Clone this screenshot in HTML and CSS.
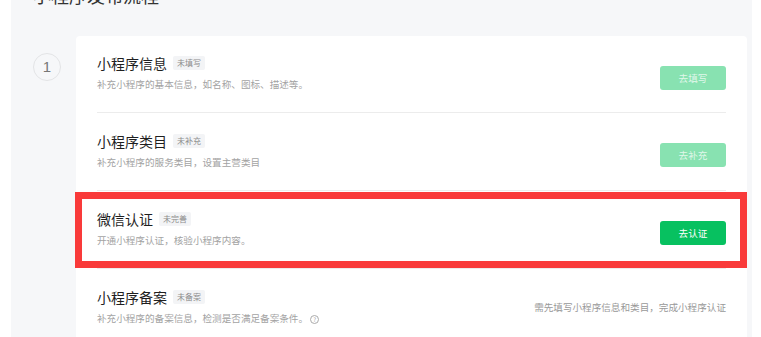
FILE: index.html
```html
<!DOCTYPE html>
<html>
<head>
  <title>小程序发布流程</title>
  <link rel="stylesheet" href="styles.css">
</head>
<body>
  <div class="panel">
    <h2 class="panel-title">小程序发布流程</h2>
    <div class="step">
      <div class="step-num">1</div>
      <div class="card">
        <div class="task">
          <div class="task-info">
            <div class="task-title">小程序信息<span class="tag">未填写</span></div>
            <div class="task-desc">补充小程序的基本信息，如名称、图标、描述等。</div>
          </div>
          <button class="btn btn-off">去填写</button>
        </div>
        <div class="task">
          <div class="task-info">
            <div class="task-title">小程序类目<span class="tag">未补充</span></div>
            <div class="task-desc">补充小程序的服务类目，设置主营类目</div>
          </div>
          <button class="btn btn-off">去补充</button>
        </div>
        <div class="task marked">
          <div class="task-info">
            <div class="task-title">微信认证<span class="tag">未完善</span></div>
            <div class="task-desc">开通小程序认证，核验小程序内容。</div>
          </div>
          <button class="btn">去认证</button>
        </div>
        <div class="task">
          <div class="task-info">
            <div class="task-title">小程序备案<span class="tag">未备案</span></div>
            <div class="task-desc">补充小程序的备案信息，检测是否满足备案条件。<span class="help">?</span></div>
          </div>
          <div class="task-note">需先填写小程序信息和类目，完成小程序认证</div>
        </div>
      </div>
    </div>
  </div>
</body>
</html>
```

FILE: styles.css
```css
body {
  margin: 0;
  background: #fff;
  font-family: "Noto Sans CJK SC", "Noto Sans", sans-serif;
  color: #1f1f1f;
}
.panel {
  margin: -17px 9px 0 11px;
  padding: 0 5px 0 22px;
  background: #f6f7f9;
  min-height: 360px;
}
.panel-title {
  margin: 0;
  font-size: 18px;
  line-height: 24px;
  font-weight: normal;
  color: #333;
}
.step {
  display: flex;
  margin-top: 29px;
}
.step-num {
  width: 26px;
  height: 26px;
  margin-top: 17px;
  border: 1px solid #e3e4e6;
  border-radius: 50%;
  text-align: center;
  line-height: 26px;
  font-family: "Liberation Sans", Arial, sans-serif;
  font-size: 15px;
  color: #777;
  flex-shrink: 0;
}
.card {
  flex: 1;
  margin-left: 15px;
  background: #fff;
  border-radius: 4px;
  padding: 0 21px;
  min-height: 320px;
}
.task {
  display: flex;
  align-items: flex-start;
  justify-content: space-between;
  height: 78px;
  box-sizing: border-box;
  padding-top: 18px;
  border-bottom: 1px solid #ececec;
}
.task:first-child {
  height: 77px;
  padding-top: 17px;
}
.task:last-child {
  border-bottom: none;
}
.task.marked {
  position: relative;
}
.task.marked::after {
  content: "";
  position: absolute;
  left: -22px;
  right: -21px;
  top: 1px;
  bottom: 0;
  border: 7px solid #f93a3a;
}
.task-title {
  font-size: 14px;
  line-height: 20px;
  color: #1f1f1f;
  display: flex;
  align-items: center;
}
.tag {
  margin-left: 6px;
  padding: 0 4px;
  height: 14px;
  line-height: 14px;
  font-size: 8px;
  color: #8c8c8c;
  background: #f3f4f6;
  border-radius: 2px;
}
.task-desc {
  margin-top: 4px;
  font-size: 9.6px;
  line-height: 14px;
  color: #a3a3a3;
}
.help {
  display: inline-block;
  width: 7px;
  height: 7px;
  margin-left: 2px;
  border: 1px solid #aaa;
  border-radius: 50%;
  font-size: 6px;
  line-height: 7px;
  text-align: center;
  vertical-align: 0;
}
.btn {
  margin-top: 12px;
  width: 66px;
  height: 24px;
  border: none;
  border-radius: 3px;
  background: #07c160;
  color: #fff;
  font-family: inherit;
  font-size: 9.6px;
  padding: 0;
  cursor: pointer;
}
.task:first-child .btn {
  margin-top: 13px;
}
.btn-off {
  background: #88e2b1;
  color: rgba(255, 255, 255, 0.75);
  cursor: default;
}
.task-note {
  margin-top: 13px;
  font-size: 9.6px;
  line-height: 14px;
  color: #999;
}
```
